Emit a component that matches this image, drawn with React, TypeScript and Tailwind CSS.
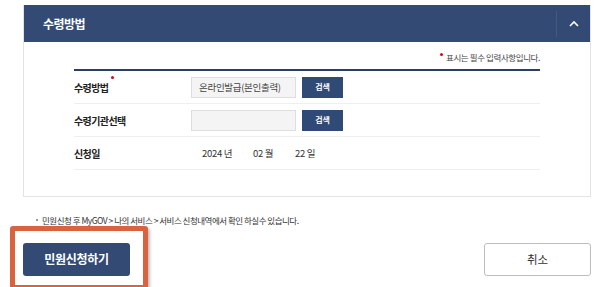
const FONT = { fontFamily: '"Noto Sans CJK KR", "Noto Sans", sans-serif' };

const Row = ({
  label,
  required,
  children,
}: {
  label: string;
  required?: boolean;
  children: React.ReactNode;
}) => (
  <div className="flex h-[33px] items-center border-b border-[#efefef]">
    <div className="relative w-[117px] text-[10px] font-bold tracking-[-0.6px] text-[#222]">
      {label}
      {required && (
        <span className="absolute top-[-4px] left-[37px] h-[3px] w-[3px] rounded-full bg-[#e60012]" />
      )}
    </div>
    {children}
  </div>
);

const SearchField = ({ value }: { value?: string }) => (
  <div className="flex items-center">
    <div className="flex h-[21px] w-[105px] items-center border border-[#dedede] bg-[#f4f4f4] px-[7px] text-[9.5px] tracking-[-0.3px] text-[#444]">
      {value}
    </div>
    <button className="ml-[6px] flex h-[21px] w-[41px] items-center justify-center bg-[#304a76] text-[8px] font-bold text-white">
      검색
    </button>
  </div>
);

export default function App() {
  return (
    <div className="relative h-[287px] w-[600px] overflow-hidden bg-white" style={FONT}>
      <section className="mt-[5px] ml-[23px] w-[568px] border border-t-0 border-[#e3e3e3]">
        {/* 헤더 */}
        <header className="flex h-[37px] items-center justify-between bg-[#334a74]">
          <h2 className="pl-[19px] text-[12px] font-bold tracking-[-0.5px] text-white">수령방법</h2>
          <div className="flex h-[26px] w-[34px] items-center justify-center border-l border-[#45597f]">
            <svg width="10" height="7" viewBox="0 0 10 7" fill="none" aria-hidden="true">
              <path d="M1 6L5 2L9 6" stroke="white" strokeWidth="1.6" />
            </svg>
          </div>
        </header>

        <div className="px-[50px] pb-[26px]">
          <p className="mt-[8px] flex h-[14px] items-center justify-end text-[8.5px] tracking-[-0.4px] text-[#444]">
            <span className="mr-[3px] mb-[6px] h-[3px] w-[3px] rounded-full bg-[#e60012]" />
            표시는 필수 입력사항입니다.
          </p>

          <div className="mt-[5px] border-t-2 border-[#2c3e63]">
            <Row label="수령방법" required>
              <SearchField value="온라인발급(본인출력)" />
            </Row>
            <Row label="수령기관선택">
              <SearchField />
            </Row>
            <Row label="신청일">
              <div className="flex pl-[11px] text-[9.5px] tracking-[-0.3px] text-[#333]">
                <span className="w-[51px]">2024 년</span>
                <span className="w-[42px]">02 월</span>
                <span>22 일</span>
              </div>
            </Row>
          </div>
        </div>
      </section>

      <p className="mt-[17px] flex items-center pl-[36px] text-[8.5px] tracking-[-0.5px] text-[#333]">
        <span className="mr-[4px] h-[2px] w-[2px] bg-[#999]" />
        민원신청 후 MyGOV &gt; 나의 서비스 &gt; 서비스 신청내역에서 확인 하실수 있습니다.
      </p>

      <div className="mt-[16px] flex justify-between px-[9px] pl-[23px]">
        <div className="relative">
          <button className="h-[33px] w-[107px] rounded-[3px] bg-[#334a74] text-[12px] font-bold tracking-[-0.3px] text-white">
            민원신청하기
          </button>
          {/* 강조 표시 */}
          <div className="pointer-events-none absolute top-[-17px] left-[-13px] h-[64px] w-[138px] rounded-[3px] border-[5px] border-[#d9623f] shadow-[2px_2px_3px_rgba(0,0,0,0.25)]" />
        </div>
        <button className="h-[33px] w-[107px] rounded-[3px] border border-[#bdbdbd] bg-white text-[11.5px] text-[#333]">
          취소
        </button>
      </div>
    </div>
  );
}
